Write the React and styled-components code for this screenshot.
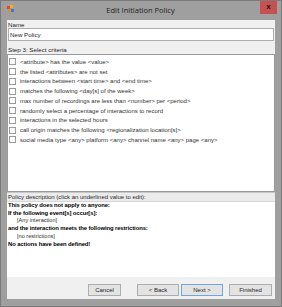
import React from "react";
import styled, { createGlobalStyle } from "styled-components";

const GlobalStyle = createGlobalStyle`
  html, body {
    margin: 0;
    padding: 0;
    background: #ffffff;
  }
  body {
    font-family: "Liberation Sans", Arial, sans-serif;
  }
`;

const criteria = [
  "<attribute> has the value <value>",
  "the listed <attributes> are not set",
  "interactions between <start time> and <end time>",
  "matches the following <day[s] of the week>",
  "max number of recordings are less than <number> per <period>",
  "randomly select a percentage of interactions to record",
  "interactions in the selected hours",
  "call origin matches the following <regionalization location[s]>",
  "social media type <any> platform <any> channel name <any> page <any>",
];

const App = () => {
  return (
    <>
      <GlobalStyle />
      <Window>
        <TitleBar>
          <AppIcon viewBox="0 0 8 8">
            <rect x="0" y="1" width="3" height="3" fill="#e04a2a" />
            <rect x="3" y="0" width="3" height="3" fill="#f2b21c" />
            <rect x="1" y="4" width="3" height="3" fill="#f08a24" />
            <rect x="4" y="4" width="3" height="3" fill="#2f7fd0" />
          </AppIcon>
          <Title>Edit Initiation Policy</Title>
          <CloseButton>x</CloseButton>
        </TitleBar>
        <Client>
          <FieldLabel>Name</FieldLabel>
          <NameInput defaultValue="New Policy" />
          <FieldLabel $top={5}>Step 3: Select criteria</FieldLabel>
          <ListBox>
            {criteria.map((text) => (
              <Row key={text}>
                <Check />
                <span>{text}</span>
              </Row>
            ))}
          </ListBox>
          <Strip>Policy description (click an underlined value to edit):</Strip>
          <Description>
            <Bold>This policy does not apply to anyone:</Bold>
            <Bold>If the following event[s] occur[s]:</Bold>
            <Plain>[Any interaction]</Plain>
            <Bold>and the interaction meets the following restrictions:</Bold>
            <Plain>[no restrictions]</Plain>
            <Bold>No actions have been defined!</Bold>
          </Description>
          <ButtonBar>
            <Button $w={33} $gap={16}>Cancel</Button>
            <Button $w={42} $gap={2}>&lt; Back</Button>
            <Button $w={42} $gap={6} $primary>Next &gt;</Button>
            <Button $w={43}>Finished</Button>
          </ButtonBar>
        </Client>
      </Window>
    </>
  );
};

export default App;

const Window = styled.div`
  width: 282px;
  height: 307px;
  box-sizing: border-box;
  background: #9f9f9f;
  border: 1px solid #7a7a7a;
  display: flex;
  flex-direction: column;
`;

const TitleBar = styled.div`
  height: 19px;
  display: flex;
  align-items: flex-start;
`;

const AppIcon = styled.svg`
  width: 8px;
  height: 8px;
  margin: 4px 0 0 6px;
`;

const Title = styled.div`
  flex: 1;
  text-align: center;
  font-family: "Open Sans", "Liberation Sans", sans-serif;
  font-size: 7.5px;
  line-height: 19px;
  color: #1e1e1e;
  padding-left: 6px;
`;

const CloseButton = styled.div`
  width: 17px;
  height: 13px;
  margin: 0 4px 0 0;
  background: #c75050;
  color: #1a1a1a;
  font-weight: bold;
  font-size: 8px;
  line-height: 12px;
  text-align: center;
`;

const Client = styled.div`
  flex: 1;
  margin: 0 6px 7px 6px;
  background: #f0f0f0;
  display: flex;
  flex-direction: column;
  min-height: 0;
`;

const FieldLabel = styled.div`
  font-size: 6.2px;
  line-height: 7px;
  color: #1e1e1e;
  padding: ${(p) => p.$top || 1}px 1px 0 1px;
`;

const NameInput = styled.input`
  margin: 0 1px 0 1px;
  height: 13px;
  box-sizing: border-box;
  border: 1px solid #abadb3;
  background: #ffffff;
  font-family: "Liberation Sans", Arial, sans-serif;
  font-size: 6.2px;
  color: #1e1e1e;
  padding: 0 1px;
  outline: none;
`;

const ListBox = styled.div`
  height: 138px;
  box-sizing: border-box;
  margin-top: 1px;
  border: 1px solid #9a9a9a;
  background: #ffffff;
  padding-top: 2px;
`;

const Row = styled.div`
  height: 9.75px;
  display: flex;
  align-items: center;
  font-size: 6px;
  color: #333333;
  white-space: nowrap;
`;

const Check = styled.span`
  width: 5px;
  height: 5px;
  border: 1px solid #9a9a9a;
  background: #ffffff;
  margin: 0 4px 0 1px;
  flex: none;
`;

const Strip = styled.div`
  height: 10px;
  box-sizing: border-box;
  background: #ebebeb;
  border-top: 1px solid #c8c8c8;
  border-bottom: 1px solid #d8d8d8;
  font-size: 6px;
  line-height: 9px;
  color: #2a2a2a;
  padding-left: 1px;
`;

const Description = styled.div`
  height: 75px;
  background: #ffffff;
  padding: 0 0 0 1px;
  box-sizing: border-box;
`;

const Bold = styled.div`
  font-weight: bold;
  font-size: 5.9px;
  line-height: 7.7px;
  color: #000000;
  white-space: nowrap;
  letter-spacing: -0.1px;
`;

const Plain = styled.div`
  font-size: 5.6px;
  line-height: 7.7px;
  color: #303030;
  padding-left: 9px;
`;

const ButtonBar = styled.div`
  flex: 1;
  display: flex;
  justify-content: flex-end;
  align-items: flex-start;
  padding: 7px 3px 0 0;
`;

const Button = styled.div`
  width: ${(p) => p.$w}px;
  height: 12px;
  box-sizing: border-box;
  margin-right: ${(p) => p.$gap || 0}px;
  background: #e3e3e3;
  border: 1px solid ${(p) => (p.$primary ? "#6fa7db" : "#adadad")};
  font-size: 6px;
  line-height: 10px;
  text-align: center;
  color: #1e1e1e;
`;
